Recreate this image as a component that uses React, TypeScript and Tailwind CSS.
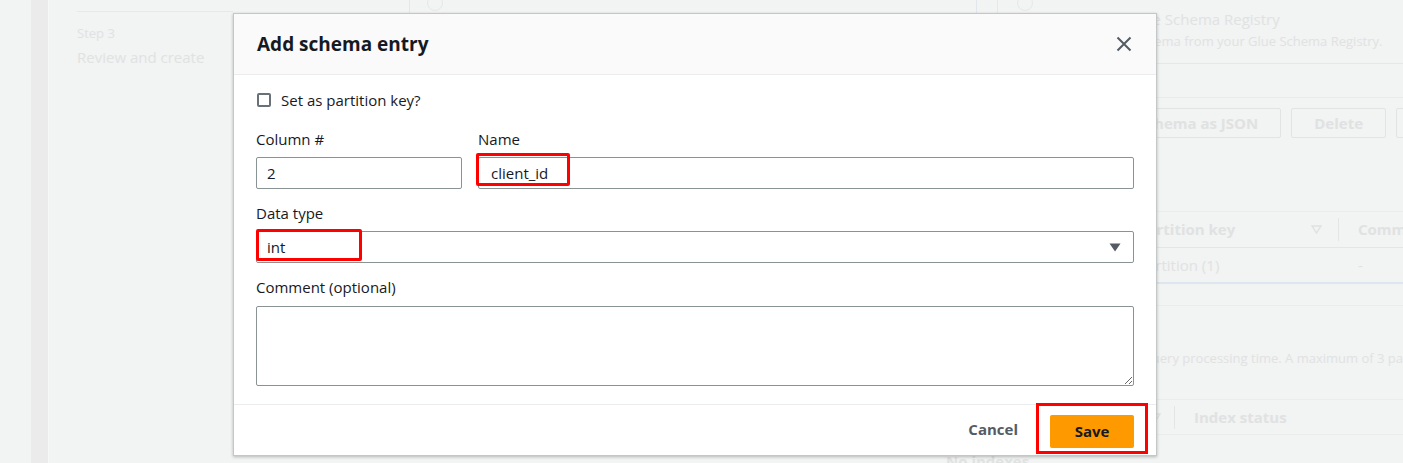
import React from "react";

const faintText = "text-[#e0e2e2]";

function Caret() {
  return (
    <svg width="12" height="9" viewBox="0 0 12 9" className="shrink-0">
      <path d="M0.5 0.5 H11.5 L6 8.5 Z" fill="#545b64" />
    </svg>
  );
}

function SortIcon() {
  return (
    <svg width="11" height="9" viewBox="0 0 11 9" className="shrink-0">
      <path d="M1 1 H10 L5.5 8 Z" fill="none" stroke="#e0e2e2" strokeWidth="1.4" />
    </svg>
  );
}

export default function App() {
  return (
    <div className="relative h-[463px] w-full overflow-hidden bg-[#f2f3f3] font-['Open_Sans',sans-serif] text-[#16191f]">
      {/* dimmed page behind the modal */}
      <div className="flex h-full">
        <div className="w-[31px] shrink-0" />
        <div className="w-[18px] shrink-0 border-r border-[#f7f7f7] bg-[#ebebeb]" />
        <div className="w-[28px] shrink-0" />
        <div className="w-[156px] shrink-0 pt-[11px]">
          <div className="border-t border-[#e7e8e8] pt-[11px]">
            <div className={`text-[13px] leading-[20px] ${faintText}`}>Step 3</div>
            <div className={`mt-[2px] text-[15px] leading-[24px] ${faintText}`}>Review and create</div>
          </div>
        </div>
        <div className="w-[176px] shrink-0" />
        <div className="min-w-0 flex-1">
          <div className="w-[1300px]">
            {/* tiles */}
            <div className="flex h-[64px] gap-[20px]">
              <div className="w-[568px] border-x border-b border-[#e1e7ec] pl-[17px]">
                <div className="mt-[-5px] h-[16px] w-[16px] rounded-full border border-[#e4e8eb]" />
              </div>
              <div className="flex w-[700px] gap-[6px] border-l border-b border-[#e6e8e8] pl-[19px]">
                <div className="mt-[-5px] h-[16px] w-[16px] shrink-0 rounded-full border border-[#e4e8eb]" />
                <div className="pt-[8px]">
                  <div className={`text-[15px] leading-[22px] ${faintText}`}>Import from Glue Schema Registry</div>
                  <div className={`mt-[2px] text-[13px] leading-[18px] ${faintText}`}>
                    Use an existing schema from your Glue Schema Registry.
                  </div>
                </div>
              </div>
            </div>

            {/* schema section */}
            <div className="mt-[33px] border-t border-[#e9eaea]">
              <div className="flex gap-[10px] pl-[674px] pt-[10px]">
                {["Edit schema as JSON", "Delete", "Add column"].map((t) => (
                  <div
                    key={t}
                    className={`flex h-[30px] items-center rounded-[2px] border border-[#e2e4e4] px-[22px] text-[15px] font-bold ${faintText}`}
                  >
                    {t}
                  </div>
                ))}
              </div>

              <div className="mt-[73px] pl-[713px]">
                <div className="flex h-[37px] items-center border-y border-t-[#ebecec] border-b-[#dfe6ec]">
                  <div className="flex w-[216px] items-center justify-between pl-[16px] pr-[16px]">
                    <span className={`text-[15px] font-bold ${faintText}`}>Partition key</span>
                    <SortIcon />
                  </div>
                  <div className="h-[23px] w-px bg-[#e4e6e6]" />
                  <div className={`pl-[19px] text-[15px] font-bold ${faintText}`}>Comment</div>
                </div>
                <div className="flex h-[36px] items-center border-b-2 border-[#dde6ee]">
                  <div className={`w-[217px] pl-[16px] text-[15px] ${faintText}`}>Partition (1)</div>
                  <div className={`pl-[19px] text-[15px] ${faintText}`}>-</div>
                </div>
              </div>

              <div className="mt-[21px] border-t border-[#ebecec] pt-[42px]">
                <div className={`pl-[515px] text-[13px] leading-[20px] ${faintText}`}>
                  Partition indexes can reduce overall query processing time. A maximum of 3 partition indexes can be added.
                </div>
                <div className="mt-[31px] flex h-[36px] items-center border-y border-[#ebecec] pl-[741px]">
                  <SortIcon />
                  <div className="ml-[13px] h-[23px] w-px bg-[#e4e6e6]" />
                  <div className={`pl-[19px] text-[15px] font-bold ${faintText}`}>Index status</div>
                </div>
                <div className={`mt-[15px] pl-[537px] text-[15px] font-bold leading-[22px] ${faintText}`}>No indexes</div>
              </div>
            </div>
          </div>
        </div>
      </div>

      {/* modal */}
      <div className="absolute left-[233px] top-[13px] w-[924px] border border-[#c3c7c7] bg-white shadow-[0_1px_3px_rgba(0,0,0,0.25)]">
        <div className="flex h-[61px] items-center justify-between border-b border-[#eaeded] bg-[#fafafa] pl-[23px] pr-[24px]">
          <h2 className="text-[19px] font-bold leading-none text-[#16191f]">Add schema entry</h2>
          <svg width="16" height="16" viewBox="0 0 16 16">
            <path d="M1.5 1.5 L14.5 14.5 M14.5 1.5 L1.5 14.5" stroke="#545b64" strokeWidth="2" />
          </svg>
        </div>

        <div className="px-[22px] pb-[18px] pt-[14px]">
          <label className="flex h-[22px] items-center gap-[10px] pl-px">
            <span className="h-[14px] w-[14px] rounded-[2px] border-2 border-[#687078]" />
            <span className="text-[15px] leading-[22px]">Set as partition key?</span>
          </label>

          <div className="mt-[17px] flex gap-[16px]">
            <div className="w-[206px]">
              <div className="text-[15px] leading-[22px]">Column #</div>
              <div className="mt-[7px] flex h-[32px] items-center rounded-[2px] border border-[#8a9393] pl-[10px] text-[15px]">
                2
              </div>
            </div>
            <div className="flex-1">
              <div className="text-[15px] leading-[22px]">Name</div>
              <div className="relative mt-[7px]">
                <div className="flex h-[32px] items-center rounded-[2px] border border-[#8a9393] pl-[12px] text-[15px]">
                  client_id
                </div>
                <div className="absolute left-[-2px] top-[-4px] h-[33px] w-[94px] rounded-[2px] border-[3px] border-[#ff0000]" />
              </div>
            </div>
          </div>

          <div className="mt-[13px]">
            <div className="text-[15px] leading-[22px]">Data type</div>
            <div className="relative mt-[7px]">
              <div className="flex h-[32px] items-center justify-between rounded-[2px] border border-[#8a9393] pl-[10px] pr-[12px] text-[15px]">
                <span>int</span>
                <Caret />
              </div>
              <div className="absolute left-0 top-[-2px] h-[32px] w-[106px] rounded-[2px] border-[3px] border-[#ff0000]" />
            </div>
          </div>

          <div className="mt-[13px]">
            <div className="text-[15px] leading-[22px]">Comment (optional)</div>
            <textarea
              className="mt-[8px] block h-[80px] w-full resize-y rounded-[2px] border border-[#8a9393] bg-white outline-none"
              defaultValue=""
            />
          </div>
        </div>

        <div className="flex items-center justify-end border-t border-[#eaeded] pb-[7px] pr-[22px] pt-[10px]">
          <span className="mb-[4px] mr-[32px] text-[15px] font-bold text-[#545b64]">Cancel</span>
          <div className="relative">
            <div className="flex h-[33px] w-[84px] items-center justify-center rounded-[2px] bg-[#ff9900] text-[15px] font-bold text-[#16191f]">
              Save
            </div>
            <div className="absolute left-[-14px] top-[-12px] h-[51px] w-[112px] border-[3px] border-[#ff0000]" />
          </div>
        </div>
      </div>
    </div>
  );
}
